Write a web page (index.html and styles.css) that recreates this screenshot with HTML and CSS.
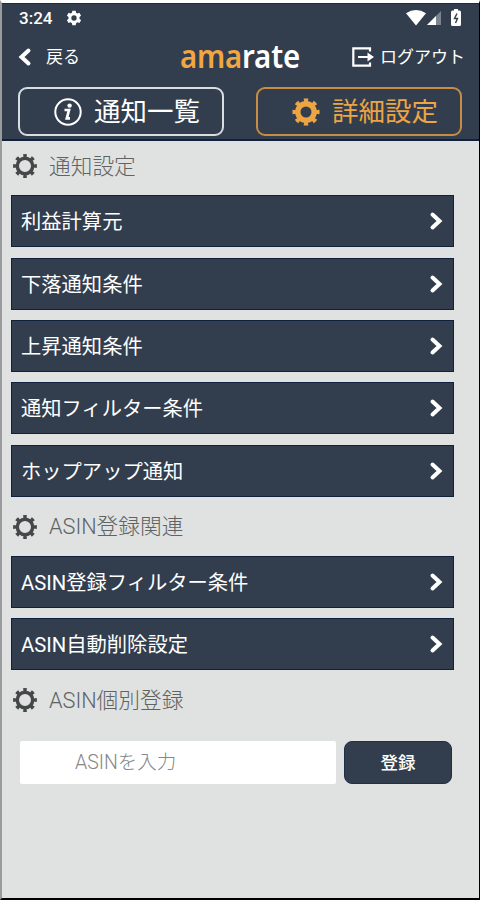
FILE: index.html
```html
<!DOCTYPE html>
<html lang="ja">
<head>
    <meta charset="UTF-8">
    <meta name="viewport" content="width=device-width, initial-scale=1.0">
    <title>amarate - 詳細設定</title>
    <link rel="stylesheet" href="styles.css">
</head>
<body>
    <!-- shared icons -->
    <svg class="sprite" aria-hidden="true">
        <symbol id="gear" viewBox="0 0 24 24">
            <circle cx="12" cy="12" r="7.7" fill="none" stroke="currentColor" stroke-width="3.4"/>
            <circle cx="12" cy="12" r="10.2" fill="none" stroke="currentColor" stroke-width="3.4" pathLength="8" stroke-dasharray=".44 .56" stroke-dashoffset=".22"/>
        </symbol>
        <symbol id="gear-bold" viewBox="0 0 28 28">
            <circle cx="14" cy="14" r="8.2" fill="none" stroke="currentColor" stroke-width="5.4"/>
            <circle cx="14" cy="14" r="11.8" fill="none" stroke="currentColor" stroke-width="3.6" pathLength="8" stroke-dasharray=".46 .54" stroke-dashoffset=".23"/>
        </symbol>
        <symbol id="chevron" viewBox="0 0 14 20">
            <path d="M3.5 3.5l7 6.5-7 6.5" fill="none" stroke="currentColor" stroke-width="4" stroke-linecap="round"/>
        </symbol>
    </svg>

    <div class="app">
        <header class="header">
            <div class="status-bar">
                <span class="clock">3:24</span>
                <svg class="status-gear" viewBox="0 0 24 24"><path fill="currentColor" fill-rule="evenodd" d="M9.5 1h5l.6 3.2 2 1.1 3-1.1 2.5 4.3-2.4 2.1v2.6l2.4 2.1-2.5 4.3-3-1.1-2 1.2-.6 3.3h-5l-.6-3.3-2-1.2-3 1.1-2.5-4.3 2.4-2.1v-2.6L1.4 8.5l2.5-4.3 3 1.1 2-1.1zM12 8a4 4 0 1 0 0 8 4 4 0 0 0 0-8z"/></svg>
                <div class="status-icons">
                    <svg width="20" height="16" viewBox="0 0 20 16"><path d="M0 3.2Q10-3.2 20 3.2L10 15.5z" fill="#fff"/></svg>
                    <svg class="signal" width="14" height="15" viewBox="0 0 14 15"><path d="M0 15L14 1v14z" fill="#7b8590"/><path d="M0 15L9 6v9z" fill="#fff"/></svg>
                    <svg class="battery" width="10" height="17" viewBox="0 0 10 17"><path d="M3 0h4v1.5h1.5Q10 1.5 10 3v12.5Q10 17 8.5 17h-7Q0 17 0 15.5V3Q0 1.5 1.5 1.5H3z" fill="#fff"/><path d="M6 4.5L3.5 9.5h3L4.5 14" fill="none" stroke="#323e4e" stroke-width="1.4"/></svg>
                </div>
            </div>

            <div class="nav-bar">
                <a class="back" href="#">
                    <svg class="back-icon"><use href="#chevron"/></svg>
                    戻る
                </a>
                <div class="logo"><span class="logo-accent">ama</span>rate</div>
                <a class="logout" href="#">
                    <svg width="22" height="20" viewBox="0 0 22 20"><path d="M18 4.5V1.3H1.3v17.4H18v-3.2M6 10h10" fill="none" stroke="currentColor" stroke-width="2.2"/><path d="M15.5 5.5L22 10l-6.5 4.5z" fill="currentColor"/></svg>
                    ログアウト
                </a>
            </div>

            <div class="tabs">
                <a class="tab" href="#">
                    <svg class="tab-icon" viewBox="0 0 28 28"><circle cx="14" cy="14" r="12.7" fill="none" stroke="currentColor" stroke-width="2"/><circle cx="15.6" cy="7.6" r="2.2" fill="currentColor"/><path d="M10.5 12h4.5l-2.2 8.3h3.2" fill="none" stroke="currentColor" stroke-width="2.7"/></svg>
                    通知一覧
                </a>
                <a class="tab active" href="#">
                    <svg class="tab-icon"><use href="#gear-bold"/></svg>
                    詳細設定
                </a>
            </div>
        </header>

        <main class="content">
            <h2 class="section-title"><svg><use href="#gear"/></svg>通知設定</h2>
            <div class="menu">
                <a class="menu-item" href="#">利益計算元<svg><use href="#chevron"/></svg></a>
                <a class="menu-item" href="#">下落通知条件<svg><use href="#chevron"/></svg></a>
                <a class="menu-item" href="#">上昇通知条件<svg><use href="#chevron"/></svg></a>
                <a class="menu-item" href="#">通知フィルター条件<svg><use href="#chevron"/></svg></a>
                <a class="menu-item" href="#">ホップアップ通知<svg><use href="#chevron"/></svg></a>
            </div>

            <h2 class="section-title"><svg><use href="#gear"/></svg>ASIN登録関連</h2>
            <div class="menu">
                <a class="menu-item" href="#">ASIN登録フィルター条件<svg><use href="#chevron"/></svg></a>
                <a class="menu-item" href="#">ASIN自動削除設定<svg><use href="#chevron"/></svg></a>
            </div>

            <h2 class="section-title"><svg><use href="#gear"/></svg>ASIN個別登録</h2>
            <form class="asin-form">
                <input class="asin-input" type="text" placeholder="ASINを入力">
                <button class="asin-button" type="button">登録</button>
            </form>
        </main>
    </div>
</body>
</html>
```

FILE: styles.css
```css
* {
    margin: 0;
    padding: 0;
    box-sizing: border-box;
}

body {
    font-family: Roboto, "Noto Sans CJK JP", sans-serif;
    background: #fff;
    color: #fff;
}

a {
    color: inherit;
    text-decoration: none;
}

svg {
    display: block;
    flex: none;
}

.sprite {
    position: absolute;
    width: 0;
    height: 0;
}

.app {
    height: 900px;
    border-top: 3px solid #fff;
    border-left: 2px solid #999b9c;
    border-right: 1px solid #000;
    border-bottom: 2px solid #000;
    background: #dfe2e1;
}

/* Header */
.header {
    height: 138px;
    background: #323e4e;
    border-top: 1px solid #1b2c42;
    border-bottom: 2px solid #10213d;
}

.status-bar {
    display: flex;
    align-items: center;
    height: 29px;
    padding: 0 18px 2px 17px;
}

.clock {
    width: 34px;
    font-size: 17px;
    font-weight: 500;
}

.status-gear {
    width: 16px;
    height: 16px;
    margin-left: 13px;
}

.status-icons {
    display: flex;
    align-items: center;
    margin-left: auto;
}

.signal {
    margin-left: 1px;
}

.battery {
    margin-left: 10px;
}

.nav-bar {
    display: flex;
    align-items: center;
    height: 48px;
    padding: 0 14px 0 16px;
}

.back,
.logout {
    display: flex;
    align-items: center;
    font-size: 17px;
    line-height: 24px;
    white-space: nowrap;
}

.back {
    width: 162px;
    gap: 14px;
}

.back-icon {
    width: 14px;
    height: 20px;
    transform: rotate(180deg);
}

.logo {
    width: 122px;
    padding-bottom: 2px;
    font-family: "Noto Sans", "Open Sans", sans-serif;
    font-size: 32.5px;
    font-weight: 600;
    line-height: 44px;
    letter-spacing: -0.2px;
    white-space: nowrap;
    transform: scaleX(0.905);
    transform-origin: left;
}

.logo-accent {
    color: #f1a642;
}

.logout {
    gap: 6px;
    margin-left: auto;
}

.tabs {
    display: flex;
    justify-content: space-between;
    padding: 6px 17px 0 16px;
}

.tab {
    display: flex;
    align-items: center;
    gap: 12px;
    width: 206px;
    height: 49px;
    padding-left: 34px;
    border: 2px solid #d9dde1;
    border-radius: 9px;
    font-size: 26.5px;
    line-height: 40px;
}

.tab.active {
    color: #eda443;
    border-color: #c78d43;
}

.tab-icon {
    width: 28px;
    height: 28px;
}

/* Settings list */
.content {
    padding: 0 25px 0 9px;
}

.section-title {
    display: flex;
    align-items: center;
    gap: 12px;
    height: 54.4px;
    padding: 0 0 3px 2px;
    color: #606364;
    font-size: 21.7px;
    font-weight: 300;
    line-height: 32px;
}

.section-title svg {
    width: 24px;
    height: 24px;
    margin-top: -1px;
    color: #444849;
}

.menu {
    display: flex;
    flex-direction: column;
    gap: 10.3px;
    margin-bottom: 5px;
}

.menu-item {
    display: flex;
    align-items: center;
    justify-content: space-between;
    height: 52px;
    padding: 2px 10px 0 9px;
    background: #323e4e;
    border: 1px solid #10213d;
    font-size: 20.3px;
    line-height: 30px;
}

.menu-item svg {
    width: 14px;
    height: 20px;
    margin-top: -2px;
}

/* ASIN form */
.asin-form {
    display: flex;
    gap: 8px;
    padding: 11.5px 1px 0 9px;
}

.asin-input {
    width: 316px;
    height: 43px;
    padding-left: 55px;
    border: 0;
    border-radius: 2px;
    background: #fff;
    font-family: inherit;
    font-size: 19.5px;
    font-weight: 300;
}

.asin-input::placeholder {
    color: #858788;
}

.asin-button {
    width: 108px;
    height: 43px;
    padding-bottom: 2px;
    border: 1px solid #1f304a;
    border-radius: 8px;
    background: #323e4e;
    color: #fff;
    font-family: inherit;
    font-size: 17.5px;
    font-weight: 500;
}
```
